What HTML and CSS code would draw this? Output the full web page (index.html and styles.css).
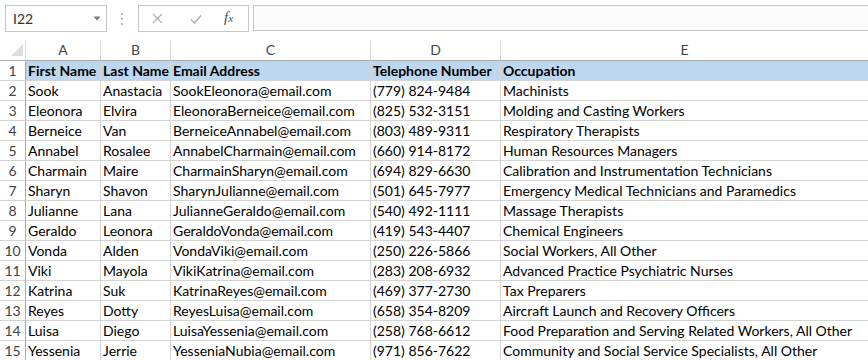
FILE: index.html
```html
<!DOCTYPE html>
<html>
<head>
<meta charset="utf-8">
<link rel="stylesheet" href="styles.css">
</head>
<body>
<div class="toolbar">
  <div class="namebox">
    <span class="cellref">I22</span>
    <svg class="caret" width="8" height="5" viewBox="0 0 8 5"><path d="M0.5 0.5 L7.5 0.5 L4 4.5 Z" fill="#7a7a7a"/></svg>
  </div>
  <svg class="grip" width="3" height="13" viewBox="0 0 3 13"><rect x="0" y="0" width="2" height="2" fill="#b8b8b8"/><rect x="0" y="5" width="2" height="2" fill="#b8b8b8"/><rect x="0" y="10" width="2" height="2" fill="#b8b8b8"/></svg>
  <div class="fxbox">
    <svg class="ico" width="11" height="11" viewBox="0 0 11 11"><path d="M1 1 L10 10 M10 1 L1 10" stroke="#b3b3b3" stroke-width="1.3" fill="none"/></svg>
    <svg class="ico" width="12" height="10" viewBox="0 0 12 10"><path d="M1 5.5 L4.5 9 L11 1.5" stroke="#b3b3b3" stroke-width="1.6" fill="none"/></svg>
    <span class="fx"><i>f</i><span class="x">x</span></span>
  </div>
  <div class="formula"></div>
</div>
<div class="sheet">
  <div class="row colhead">
    <div class="corner"><svg width="12" height="12" viewBox="0 0 12 12"><path d="M12 0 L12 12 L0 12 Z" fill="#dcdcdc"/></svg></div>
    <div class="ch">A</div><div class="ch">B</div><div class="ch">C</div><div class="ch">D</div><div class="ch last">E</div>
  </div>
  <div class="row head"><div class="rn">1</div><div class="c">First Name</div><div class="c">Last Name</div><div class="c">Email Address</div><div class="c">Telephone Number</div><div class="c last">Occupation</div></div>
  <div class="row"><div class="rn">2</div><div class="c">Sook</div><div class="c">Anastacia</div><div class="c">SookEleonora@email.com</div><div class="c">(779) 824-9484</div><div class="c last">Machinists</div></div>
  <div class="row"><div class="rn">3</div><div class="c">Eleonora</div><div class="c">Elvira</div><div class="c">EleonoraBerneice@email.com</div><div class="c">(825) 532-3151</div><div class="c last">Molding and Casting Workers</div></div>
  <div class="row"><div class="rn">4</div><div class="c">Berneice</div><div class="c">Van</div><div class="c">BerneiceAnnabel@email.com</div><div class="c">(803) 489-9311</div><div class="c last">Respiratory Therapists</div></div>
  <div class="row"><div class="rn">5</div><div class="c">Annabel</div><div class="c">Rosalee</div><div class="c">AnnabelCharmain@email.com</div><div class="c">(660) 914-8172</div><div class="c last">Human Resources Managers</div></div>
  <div class="row"><div class="rn">6</div><div class="c">Charmain</div><div class="c">Maire</div><div class="c">CharmainSharyn@email.com</div><div class="c">(694) 829-6630</div><div class="c last">Calibration and Instrumentation Technicians</div></div>
  <div class="row"><div class="rn">7</div><div class="c">Sharyn</div><div class="c">Shavon</div><div class="c">SharynJulianne@email.com</div><div class="c">(501) 645-7977</div><div class="c last">Emergency Medical Technicians and Paramedics</div></div>
  <div class="row"><div class="rn">8</div><div class="c">Julianne</div><div class="c">Lana</div><div class="c">JulianneGeraldo@email.com</div><div class="c">(540) 492-1111</div><div class="c last">Massage Therapists</div></div>
  <div class="row"><div class="rn">9</div><div class="c">Geraldo</div><div class="c">Leonora</div><div class="c">GeraldoVonda@email.com</div><div class="c">(419) 543-4407</div><div class="c last">Chemical Engineers</div></div>
  <div class="row"><div class="rn">10</div><div class="c">Vonda</div><div class="c">Alden</div><div class="c">VondaViki@email.com</div><div class="c">(250) 226-5866</div><div class="c last">Social Workers, All Other</div></div>
  <div class="row"><div class="rn">11</div><div class="c">Viki</div><div class="c">Mayola</div><div class="c">VikiKatrina@email.com</div><div class="c">(283) 208-6932</div><div class="c last">Advanced Practice Psychiatric Nurses</div></div>
  <div class="row"><div class="rn">12</div><div class="c">Katrina</div><div class="c">Suk</div><div class="c">KatrinaReyes@email.com</div><div class="c">(469) 377-2730</div><div class="c last">Tax Preparers</div></div>
  <div class="row"><div class="rn">13</div><div class="c">Reyes</div><div class="c">Dotty</div><div class="c">ReyesLuisa@email.com</div><div class="c">(658) 354-8209</div><div class="c last">Aircraft Launch and Recovery Officers</div></div>
  <div class="row"><div class="rn">14</div><div class="c">Luisa</div><div class="c">Diego</div><div class="c">LuisaYessenia@email.com</div><div class="c">(258) 768-6612</div><div class="c last">Food Preparation and Serving Related Workers, All Other</div></div>
  <div class="row"><div class="rn">15</div><div class="c">Yessenia</div><div class="c">Jerrie</div><div class="c">YesseniaNubia@email.com</div><div class="c">(971) 856-7622</div><div class="c last">Community and Social Service Specialists, All Other</div></div>
</div>
</body>
</html>
```
FILE: styles.css
```css
html, body {
  margin: 0;
  padding: 0;
  background: #ffffff;
}
body {
  width: 868px;
  height: 360px;
  overflow: hidden;
  font-family: Lato, "Open Sans", sans-serif;
  color: #000;
}
.toolbar {
  height: 40px;
  box-sizing: border-box;
  padding: 5px 0 0 5px;
  display: flex;
  align-items: flex-start;
}
.namebox {
  width: 102px;
  height: 27px;
  box-sizing: border-box;
  border: 1px solid #c6c6c6;
  background: #fff;
  display: flex;
  align-items: center;
  justify-content: space-between;
  padding: 0 5px 1px 7px;
}
.cellref {
  font-size: 14px;
  color: #333;
}
.caret { margin-top: 1px; }
.grip {
  margin: 8px 14px 0 14px;
}
.fxbox {
  width: 111px;
  height: 27px;
  box-sizing: border-box;
  border: 1px solid #c6c6c6;
  background: #fff;
  display: flex;
  align-items: center;
  padding: 0 0 0 13px;
  gap: 25px;
}
.fxbox .ico:nth-child(2) { margin-left: 2px; }
.fx {
  font-family: "Liberation Serif", serif;
  font-size: 15px;
  color: #4d4d4d;
  margin-left: -3px;
  margin-top: -2px;
}
.fx .x {
  font-style: italic;
  font-size: 11px;
}
.formula {
  flex: 1;
  margin-left: 4px;
  height: 26px;
  box-sizing: border-box;
  border-top: 1px solid #c6c6c6;
  border-bottom: 1px solid #c6c6c6;
  border-left: 1px solid #c6c6c6;
  background: #fcfcfc;
}
.sheet {
  font-size: 14px;
}
.row {
  display: grid;
  grid-template-columns: 26px 75px 70px 200px 130px 1fr;
  height: 20px;
  line-height: 19px;
}
.row > div {
  box-sizing: border-box;
  border-bottom: 1px solid #d4d4d4;
  border-right: 1px solid #d4d4d4;
  white-space: nowrap;
  overflow: hidden;
}
.row > div.last { border-right: none; }
.colhead { height: 21px; }
.colhead > div {
  border-bottom: 1px solid #ababab;
  border-right: 1px solid #dadada;
  line-height: 20px;
}
.corner {
  display: flex;
  align-items: flex-end;
  justify-content: flex-end;
  padding: 0 2px 4px 0;
}
.corner svg { display: block; }
.ch {
  text-align: center;
  color: #444;
}
.rn {
  text-align: center;
  color: #444;
  border-right: 1px solid #ababab !important;
}
.colhead > .corner { border-right: 1px solid #dadada; }
.c {
  padding-left: 2px;
}
.head .c {
  background: #bdd7ee;
  font-weight: bold;
}
```
